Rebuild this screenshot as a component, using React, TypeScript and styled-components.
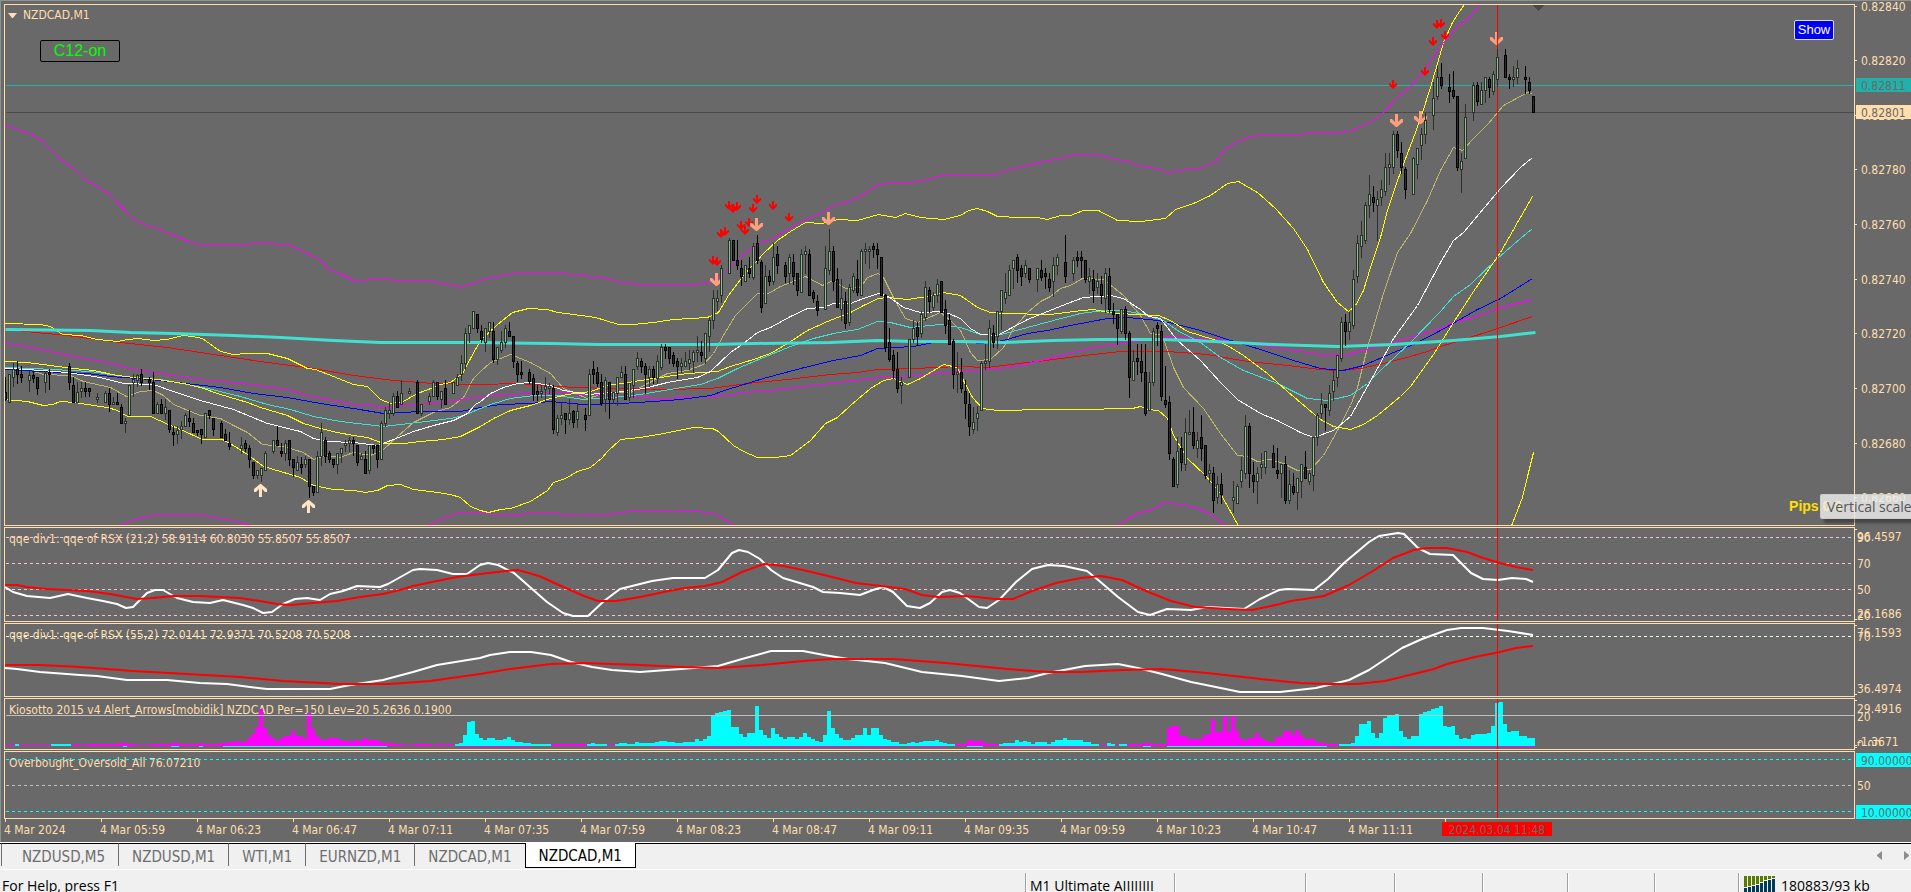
import React from "react";
import styled, { createGlobalStyle } from "styled-components";

const GREY = "#696969";
const CREAM = "#ffdead";
const CHART_FONT = '"DejaVu Sans Condensed", "DejaVu Sans", sans-serif';
const UI_FONT = '"Open Sans", "Noto Sans", sans-serif';

const GlobalStyle = createGlobalStyle`
  * { box-sizing: border-box; }
  html, body { margin: 0; padding: 0; background: #f0f0f0; overflow: hidden; }
`;

/* ---------- layout ---------- */

const Terminal = styled.div`
  display: flex;
  flex-direction: column;
  height: 100vh;
  overflow: hidden;
  font-family: ${UI_FONT};
`;

const ChartWindow = styled.main`
  position: relative;
  flex: 1;
  display: flex;
  flex-direction: column;
  gap: 1px;
  padding: 3px 0 0 3px;
  border-top: 1px solid #8f938f;
  border-left: 1px solid #8f938f;
  background: ${GREY};
  color: ${CREAM};
  font-family: ${CHART_FONT};
  font-size: 12px;
  overflow: hidden;
`;

const Row = styled.section<{ $height?: number }>`
  display: grid;
  grid-template-columns: 1fr 56px;
  grid-template-rows: minmax(0, 1fr);
  ${(p) => (p.$height ? `height: ${p.$height}px; flex: none;` : "flex: 1; min-height: 0;")}
`;

const Pane = styled.div`
  position: relative;
  border: 1px solid ${CREAM};
  overflow: hidden;
`;

const PaneTitle = styled.h2`
  margin: 0;
  padding: 3px 4px 0;
  font-size: 12px;
  line-height: 16px;
  font-weight: 400;
  white-space: nowrap;
`;

const SymbolTitle = styled(PaneTitle)`
  display: flex;
  align-items: center;
  gap: 6px;
  padding: 2px 3px 0;
`;

const Plot = styled.svg`
  position: absolute;
  inset: 0;
  width: 100%;
  height: 100%;
  pointer-events: none;
`;

const Axis = styled.svg`
  display: block;
  width: 100%;
  height: 100%;
  overflow: visible;
  font-family: ${CHART_FONT};
  font-size: 12px;
`;

const ToggleButton = styled.button`
  position: absolute;
  left: 35px;
  top: 35px;
  width: 80px;
  height: 22px;
  padding: 0;
  border: 1px solid #000;
  border-radius: 2px;
  background: ${GREY};
  color: #00ff00;
  font: 16px/20px "Liberation Sans", Arial, sans-serif;
`;

const ShowButton = styled.button`
  position: absolute;
  right: 20px;
  top: 15px;
  width: 40px;
  height: 20px;
  padding: 0;
  border: 1px solid #dcdcdc;
  border-radius: 2px;
  background: #0000f0;
  color: #fff;
  font: 13px/18px "Liberation Sans", Arial, sans-serif;
`;

const Pips = styled.output`
  position: absolute;
  right: 12px;
  bottom: 11px;
  color: #ffe000;
  font: bold 14px/16px "Liberation Sans", Arial, sans-serif;
`;

const Tooltip = styled.div`
  position: absolute;
  left: calc(100% - 91px);
  top: 493px;
  height: 25px;
  padding: 0 6px;
  border: 1px solid rgba(200, 200, 200, 0.8);
  border-radius: 2px;
  background: rgba(238, 238, 238, 0.82);
  box-shadow: 4px 4px 3px rgba(0, 0, 0, 0.35);
  color: #555;
  font: 14px/24px ${UI_FONT};
  white-space: nowrap;
`;

const TimeAxis = styled.div`
  position: relative;
  display: flex;
  height: 23px;
  flex: none;
  margin-top: -1px;
  overflow: hidden;
`;

const TimeLabel = styled.time`
  position: relative;
  flex: none;
  width: 96px;
  padding-top: 4px;
  line-height: 15px;
  white-space: nowrap;
  &::before {
    content: "";
    position: absolute;
    left: 1px;
    top: 0;
    width: 1px;
    height: 3px;
    background: ${CREAM};
  }
`;

const TimeTag = styled.time`
  position: absolute;
  left: 1438px;
  top: 3px;
  width: 110px;
  height: 14px;
  background: #ff0000;
  color: ${GREY};
  line-height: 16px;
  text-align: center;
`;

const TabStrip = styled.nav`
  display: flex;
  flex: none;
  height: 28px;
  padding-left: 1px;
  border-top: 1px solid #fff;
  border-bottom: 1px solid #fff;
  background: linear-gradient(#000, #000) top / 100% 1px no-repeat #f0f0f0;
  font-family: ${CHART_FONT};
`;

const Tab = styled.button<{ $active?: boolean; $first?: boolean }>`
  height: ${(p) => (p.$active ? 25 : 23)}px;
  padding: ${(p) => (p.$active ? 2 : 3)}px 13px 0 ${(p) => (p.$first ? 20 : 13)}px;
  border: 0 solid #6d6d6d;
  border-left-width: 1px;
  ${(p) => p.$active && "border-color: #000; border-right-width: 1px; border-bottom-width: 1px;"}
  background: ${(p) => (p.$active ? "#fff" : "transparent")};
  color: ${(p) => (p.$active ? "#000" : "#6d6d6d")};
  font: 15px/20px ${CHART_FONT};
  white-space: nowrap;
  border-top: ${(p) => (p.$active ? "0" : "1px solid #000")};
`;

const Scrollers = styled.div`
  display: flex;
  gap: 10px;
  margin-left: auto;
  padding: 3px 0 0;
`;

const ScrollButton = styled.button`
  width: 14px;
  height: 18px;
  padding: 0;
  border: 0;
  background: transparent;
`;

const StatusBar = styled.footer`
  display: grid;
  grid-template-columns: 1fr 149px 131px 89px 88px 85px 87px 84px 173px;
  flex: none;
  height: 22px;
  background: #f0f0f0;
  color: #000;
  font-size: 14px;
  white-space: nowrap;
`;

const StatusCell = styled.span<{ $first?: boolean }>`
  display: flex;
  gap: 6px;
  margin-top: 3px;
  height: 24px;
  padding-left: ${(p) => (p.$first ? 2 : 4)}px;
  ${(p) => !p.$first && "border-left: 1px solid #a0a0a0; box-shadow: inset 1px 0 #fff;"}
  line-height: 26px;
`;

/* ---------- data ---------- */

/* One bar per line item: x, high, body top, body bottom, low, direction */
const CANDLES = `
5 377 392 399 400 D,9 374 374 402 402 U,13 363 369 377 386 U,17 361 369 374 383 D,21 366 374 377 382 D,29 371 375 380 391 U,33 372 375 378 382 D,37 377 377 388 394 D,45 371 373 382 392 U,49 369 372 374 389 D,
69 363 366 382 389 D,73 377 385 402 402 D,77 382 392 402 402 U,81 382 388 391 397 U,85 382 388 391 396 D,89 388 388 391 396 D,97 393 397 399 402 U,105 391 393 402 402 U,109 388 393 404 411 D,113 397 402 404 404 U,
117 393 402 404 404 D,121 404 407 423 423 D,125 418 421 423 432 U,129 385 385 415 415 U,133 374 379 382 396 U,137 374 375 380 386 U,141 369 374 382 385 D,149 377 380 382 389 D,153 372 382 413 413 D,157 402 404 413 413 U,
161 399 404 413 413 D,165 399 407 413 419 U,169 410 410 429 432 D,173 426 432 434 445 D,177 426 430 434 443 U,181 421 426 429 438 U,185 413 415 426 426 U,189 410 418 421 426 D,193 418 423 432 432 D,197 430 430 432 435 D,
201 429 429 434 443 D,205 413 413 437 437 U,209 410 410 415 418 D,213 418 418 429 435 D,221 421 423 437 437 D,225 429 434 440 440 D,229 432 443 446 449 D,241 437 445 448 453 U,245 440 443 448 451 D,249 445 448 459 467 D,
253 462 462 475 478 D,257 470 470 475 478 U,261 468 468 475 481 U,265 451 453 470 470 U,273 440 440 451 453 U,277 426 440 445 445 D,281 443 451 453 456 D,285 440 443 453 460 U,289 440 440 459 465 D,293 459 459 467 476 D,
297 456 462 470 470 U,301 457 464 467 473 D,305 456 459 464 467 U,309 459 459 486 497 D,313 486 486 492 495 D,317 451 456 492 492 U,321 423 432 456 465 U,325 437 440 456 462 D,329 451 453 459 462 D,333 459 459 464 467 D,
337 453 453 464 473 U,341 448 448 453 462 U,345 440 443 445 451 U,349 437 440 443 451 U,353 437 440 443 455 D,357 445 445 462 465 D,361 453 456 459 459 U,365 451 459 473 473 D,369 445 445 470 473 U,373 445 445 448 453 D,
377 445 445 459 467 D,381 421 423 459 459 U,385 407 410 423 426 U,389 402 410 413 418 U,393 393 396 413 415 U,397 391 396 407 407 D,401 380 393 404 404 U,409 388 391 393 393 U,417 380 382 413 413 D,421 404 404 413 415 U,
429 393 396 401 404 U,433 380 382 396 396 U,437 382 382 396 399 D,441 391 391 399 407 U,445 380 388 404 404 D,453 382 382 393 393 U,457 374 377 385 385 U,461 355 363 374 380 U,465 328 333 363 369 U,469 325 325 333 342 U,
473 311 311 328 328 U,477 314 314 328 332 D,481 325 331 339 342 D,485 328 328 342 351 U,489 322 322 331 337 U,493 322 331 359 362 D,497 347 347 359 364 U,501 331 342 350 352 U,505 325 328 342 347 U,509 322 331 336 336 D,
513 336 336 361 367 D,517 361 363 374 381 D,521 361 372 374 378 D,529 369 372 381 383 D,533 374 378 394 400 D,537 385 391 394 400 D,541 385 391 393 397 U,545 377 386 389 400 U,549 383 386 388 393 U,553 385 388 429 433 D,
557 415 418 432 435 U,561 403 415 418 424 U,565 413 413 419 433 D,569 399 413 419 424 U,573 410 411 422 427 D,577 404 411 419 427 U,585 408 415 419 430 D,589 369 374 415 415 U,593 361 369 374 383 D,597 367 372 383 386 D,
601 374 382 403 405 D,605 377 380 399 411 U,609 382 382 399 418 D,613 392 392 399 403 U,617 377 377 393 405 U,621 366 372 377 377 U,625 366 374 399 399 D,629 383 383 397 400 U,633 369 369 385 397 U,637 352 358 366 369 U,
641 358 361 366 372 D,645 363 366 374 393 D,649 366 369 377 386 U,653 366 369 377 383 D,657 355 361 378 383 U,661 344 347 367 369 U,665 344 347 350 358 D,669 347 347 358 363 D,673 352 355 363 366 D,677 358 361 366 378 D,
681 358 363 366 372 U,685 352 361 366 366 U,689 350 359 363 369 U,693 350 352 361 372 U,697 336 350 352 361 U,701 341 352 355 361 D,705 333 333 358 363 U,709 317 320 336 351 U,713 290 298 320 328 U,717 290 298 301 310 U,
721 265 268 295 302 U,729 238 240 273 273 U,733 240 240 260 260 D,737 240 260 265 269 D,741 260 268 276 285 D,745 265 265 281 281 U,749 257 268 273 277 D,753 243 246 277 279 U,757 235 243 260 263 D,761 260 262 307 312 D,
765 265 276 303 303 U,769 270 276 281 285 D,773 243 257 281 284 U,777 246 254 265 273 D,785 262 265 276 282 D,789 254 257 273 283 U,793 254 262 276 284 D,797 273 273 290 295 D,801 249 254 292 292 U,805 246 251 254 273 U,
809 249 254 295 295 D,813 290 292 298 302 D,817 295 301 310 315 D,825 246 268 309 309 U,829 229 251 270 274 U,833 246 251 281 290 D,837 268 279 307 307 D,841 279 298 309 320 U,845 292 301 323 328 D,849 284 287 322 325 U,
853 273 276 290 292 U,857 260 279 292 295 D,861 249 251 295 295 U,865 243 249 251 263 U,869 246 249 251 268 U,873 243 246 249 257 D,877 243 249 254 268 D,881 257 257 295 295 D,885 294 295 347 351 D,889 328 342 359 361 D,
893 350 355 370 378 D,897 352 369 388 392 D,901 377 382 385 403 U,909 339 339 377 377 U,913 320 328 339 342 U,917 322 327 336 345 D,921 311 314 333 337 U,925 281 287 317 320 U,929 287 290 301 312 D,933 292 295 307 310 U,
937 279 284 295 302 U,941 281 281 312 312 D,945 300 309 325 333 D,949 314 320 344 344 D,953 339 341 374 388 D,957 352 372 374 392 U,961 358 372 388 392 D,965 380 391 403 418 D,969 393 404 426 435 D,973 407 422 429 433 U,
977 406 413 418 430 U,981 361 363 410 410 U,985 344 361 363 369 U,989 320 328 361 367 U,993 325 333 342 347 D,997 311 311 336 348 U,1001 290 290 311 329 U,1005 273 292 298 303 U,1009 265 270 295 295 U,1013 260 260 268 288 U,
1017 254 257 270 282 D,1021 265 268 276 285 D,1025 260 265 273 277 U,1029 268 268 279 282 D,1037 268 268 279 291 U,1041 260 270 277 280 D,1045 268 273 276 288 D,1049 273 279 287 291 D,1053 257 265 281 296 U,1057 254 257 265 274 U,
1065 235 262 276 282 D,1073 257 260 273 280 U,1077 251 257 260 266 D,1081 251 257 260 277 D,1085 260 260 279 282 D,1089 268 276 281 293 U,1093 270 279 290 302 D,1097 273 281 287 293 U,1101 276 284 295 303 D,1105 268 273 298 312 U,
1109 268 276 309 312 D,1113 303 311 314 323 D,1117 314 314 328 344 D,1121 309 309 331 333 U,1125 306 309 333 339 D,1129 331 333 377 397 D,1133 350 361 380 380 U,1137 344 358 361 374 D,1141 344 361 372 381 D,1145 344 372 413 415 D,
1149 372 382 410 410 U,1153 328 331 382 385 U,1157 322 325 328 345 D,1161 325 331 396 400 D,1165 366 400 404 407 D,1169 396 402 453 459 D,1173 457 459 486 486 D,1177 437 451 484 487 U,1181 437 448 462 470 D,1185 418 432 464 470 U,
1189 410 432 434 434 U,1193 407 432 445 448 D,1197 432 440 448 457 U,1201 415 437 448 460 D,1205 445 445 475 478 D,1209 464 470 473 482 U,1213 467 473 500 512 D,1217 476 484 497 503 U,1221 473 484 494 503 D,1233 481 497 500 512 U,
1237 484 486 503 503 U,1241 457 470 481 487 U,1245 415 426 473 478 U,1249 423 426 473 487 D,1253 462 475 481 492 D,1257 467 473 481 503 U,1261 453 464 467 478 U,1265 451 451 467 473 U,1273 445 453 467 467 D,1277 448 470 473 478 D,
1281 464 464 473 497 U,1285 456 464 500 503 D,1289 470 484 500 503 U,1293 473 486 492 494 D,1297 478 478 492 509 U,1301 464 464 481 497 U,1305 451 467 478 478 D,1309 470 473 481 484 U,1313 437 437 475 490 U,1317 413 415 437 445 U,
1321 393 404 413 418 U,1325 404 404 407 430 D,1329 385 393 410 415 U,1333 370 380 391 400 U,1337 355 355 377 386 U,1341 317 322 358 361 U,1345 314 322 331 345 D,1349 312 322 331 339 U,1353 270 279 325 328 U,1357 235 243 276 282 U,
1361 221 235 246 257 U,1365 202 205 240 243 U,1369 175 194 205 217 U,1373 186 197 202 211 D,1377 191 199 205 240 U,1381 180 189 197 205 U,1385 153 167 191 195 U,1389 153 164 167 184 U,1393 131 134 167 173 U,1397 131 134 150 157 D,
1401 142 153 167 173 D,1405 167 169 189 198 D,1413 157 158 194 194 U,1417 148 148 164 178 U,1421 128 134 145 159 U,1425 113 120 134 143 U,1433 82 98 115 129 U,1437 66 77 96 99 U,1441 63 77 85 88 D,1449 74 87 91 102 D,
1453 71 90 96 98 D,1457 96 96 167 170 D,1461 153 161 169 192 U,1465 104 117 158 158 U,1473 82 85 112 120 U,1477 82 85 101 105 D,1481 82 90 104 104 U,1485 77 77 90 102 U,1489 77 79 87 97 D,1493 71 74 91 94 U,
1497 49 57 79 86 U,1505 49 55 77 77 D,1509 74 77 79 88 D,1513 66 77 79 86 U,1517 60 68 77 83 U,1525 66 77 79 93 D,1529 77 82 90 93 D,1533 96 96 112 112 D`;

type Line = { color: string; width?: number; points: string };

const PRICE_LINES: Line[] = [
  { color: "#bdb76b", points: "5,367 30,370 43,374 70,375 83,381 110,387 126,396 140,391 153,390 163,395 173,404 200,415 220,418 233,425 247,432 262,444 283,446 303,452 313,459 325,455 340,457 353,452 370,455 383,449 397,436 413,422 433,412 450,407 463,397 473,378 480,371 490,362 510,354 530,362 550,373 563,388 587,398 607,392 630,392 647,383 667,373 687,370 703,364 713,353 723,335 735,315 757,293 768,293 780,286 805,276 822,285 833,280 845,288 860,287 867,277 878,273 883,277 893,297 905,318 917,322 940,312 950,320 960,330 970,352 977,360 990,359 1003,347 1013,328 1027,312 1040,301 1050,296 1060,288 1070,285 1082,278 1103,279 1123,295 1140,315 1150,333 1162,335 1173,367 1183,387 1203,408 1220,433 1237,455 1247,456 1257,461 1270,459 1283,463 1297,470 1310,469 1323,455 1337,430 1350,405 1357,387 1367,347 1383,293 1397,252 1410,233 1427,200 1440,170 1453,147 1462,150 1473,138 1488,123 1503,105 1527,92 1532,93" },
  { color: "#ff0000", points: "5,329 25,331 67,335 120,342 167,347 213,354 260,361 313,368 353,375 393,380 433,383 480,384 517,383 547,385 573,387 613,388 663,389 710,388 747,383 787,379 830,374 857,372 877,369 913,368 960,366 987,367 1010,364 1053,359 1093,354 1120,351 1167,351 1207,354 1247,361 1287,365 1320,369 1337,370 1360,368 1387,362 1410,356 1427,351 1440,346 1460,340 1497,328 1532,316" },
  { color: "#ff00ff", points: "5,343 20,345 40,349 73,356 107,362 133,369 173,375 207,380 243,383 287,389 307,395 333,400 360,405 387,406 420,404 450,401 480,396 507,394 533,393 560,393 590,394 620,396 660,398 713,396 747,392 780,389 813,385 847,381 880,377 913,375 960,371 993,369 1020,365 1060,355 1093,347 1133,341 1167,337 1207,338 1243,342 1293,350 1320,354 1347,354 1367,349 1410,337 1440,328 1453,322 1473,317 1500,307 1532,299" },
  { color: "#0000ff", points: "5,369 40,371 87,373 110,376 150,379 177,382 220,387 253,393 287,397 320,403 353,408 383,413 420,411 460,411 480,407 500,404 530,403 550,401 583,404 620,403 653,401 680,399 710,395 727,389 763,378 800,368 833,360 860,355 877,348 913,346 933,342 960,341 980,343 1003,340 1027,333 1047,330 1070,325 1107,318 1127,317 1157,320 1173,323 1200,330 1227,339 1260,349 1293,360 1320,368 1343,370 1363,365 1393,352 1413,344 1440,330 1477,309 1500,298 1532,278" },
  { color: "#40e0d0", points: "5,367 33,368 90,371 117,375 133,377 160,379 187,384 207,388 240,396 267,404 290,409 313,416 340,421 383,426 417,422 450,418 463,415 480,408 493,403 510,398 533,395 557,395 583,399 613,397 640,394 670,389 700,384 717,378 737,368 763,357 790,346 813,338 833,333 857,329 877,321 890,322 910,327 940,324 960,327 980,334 997,335 1027,327 1053,320 1080,313 1103,310 1123,310 1143,314 1163,320 1177,330 1200,342 1220,357 1243,370 1277,383 1307,398 1327,400 1350,395 1367,383 1380,370 1410,342 1440,311 1453,296 1470,284 1497,258 1520,238 1532,228" },
  { color: "#ffff00", points: "5,361 27,362 50,365 73,368 93,370 117,375 133,377 157,379 183,383 200,387 220,394 247,402 260,407 287,415 303,423 320,428 337,432 353,435 367,437 383,443 403,443 420,441 443,439 460,436 470,431 480,426 493,418 510,410 530,405 550,398 567,394 590,391 607,385 627,382 653,378 687,373 717,371 730,366 753,359 770,353 787,343 807,330 827,321 850,312 863,305 878,298 887,297 907,299 927,296 943,292 960,295 977,307 990,312 1003,313 1050,314 1073,311 1093,309 1103,311 1117,313 1137,314 1158,315 1170,320 1187,331 1213,339 1227,345 1243,355 1267,373 1287,391 1307,408 1320,419 1333,426 1350,429 1363,424 1377,415 1400,396 1410,386 1433,354 1453,322 1473,291 1500,252 1517,222 1532,196" },
  { color: "#ffff00", points: "5,323 40,324 50,326 62,334 80,335 97,339 117,341 127,339 138,338 153,340 167,339 182,335 192,336 202,338 220,351 233,354 247,353 267,353 287,358 307,368 315,369 333,376 353,384 367,386 380,399 390,403 403,401 417,393 433,387 440,384 450,382 462,373 470,358 480,340 497,324 512,312 528,308 547,309 557,312 573,314 595,317 618,324 633,324 653,322 673,319 707,317 718,312 728,295 743,275 763,253 777,240 790,231 805,222 822,223 837,219 857,220 878,214 895,217 905,213 920,217 943,219 960,215 968,210 977,208 987,211 997,216 1020,217 1037,217 1047,219 1060,215 1070,215 1083,210 1098,210 1117,220 1140,221 1165,218 1175,209 1193,203 1210,195 1227,183 1238,181 1257,192 1275,208 1293,228 1307,249 1323,282 1337,302 1348,311 1355,305 1363,290 1370,267 1380,237 1387,210 1397,180 1407,153 1415,132 1422,112 1430,87 1437,63 1443,42 1452,22 1457,14 1466,1" },
  { color: "#ffff00", points: "5,399 27,401 43,405 52,404 60,401 75,402 80,403 107,407 117,410 127,416 150,416 168,424 180,429 202,439 222,439 233,445 247,454 263,466 280,471 300,477 313,485 333,489 353,490 365,492 377,490 387,485 400,484 413,489 430,491 450,494 460,497 470,506 480,510 488,512 500,509 510,508 530,501 547,490 553,482 565,478 577,471 590,467 602,457 607,451 620,439 640,437 663,433 693,427 712,428 718,431 733,445 743,451 757,457 775,457 790,455 810,440 825,423 837,417 850,405 870,388 883,380 893,378 907,384 920,378 943,364 957,367 964,382 972,397 982,408 997,410 1047,409 1097,409 1110,408 1132,408 1140,406 1147,409 1158,410 1167,418 1173,435 1187,458 1205,475 1220,493 1240,529" },
  { color: "#ffff00", points: "1510,528 1522,497 1528,472 1533,452" },
  { color: "#ff00ff", points: "5,125 20,130 36,136 43,142 57,156 73,168 83,178 100,188 110,195 133,219 147,225 160,229 167,233 177,236 187,241 200,244 240,244 260,243 287,244 307,253 322,261 327,268 337,272 353,280 380,279 400,280 427,281 440,282 447,284 461,286 470,284 480,280 490,277 503,275 515,273 533,272 563,273 580,275 595,276 608,278 623,283 643,284 662,285 687,285 703,283 712,281 722,274 733,263 747,251 760,242 770,239 787,229 805,219 820,213 830,207 840,203 848,201 860,196 877,184 887,183 910,182 923,180 945,174 995,174 1010,169 1027,165 1043,161 1055,159 1072,155 1097,154 1110,158 1127,161 1140,166 1157,168 1167,172 1175,171 1187,169 1198,168 1208,164 1215,161 1225,149 1235,142 1248,137 1261,134 1300,134 1313,132 1340,132 1352,130 1367,123 1382,113 1397,97 1410,86 1425,69 1435,53 1443,42 1455,28 1467,19 1481,2" },
  { color: "#ff00ff", points: "119,525 133,519 147,516 163,514 187,514 203,515 227,519 252,525" },
  { color: "#ff00ff", points: "427,525 440,519 457,513 465,512 480,513 500,514 550,513 587,515 617,513 627,511 653,510 692,511 710,512 720,516 730,523 735,525" },
  { color: "#ff00ff", points: "1116,525 1130,517 1140,512 1152,509 1164,502 1177,504 1190,506 1200,509 1210,514 1225,525" },
  { color: "#ffffff", points: "5,368 27,369 67,372 100,377 123,383 153,384 173,391 200,400 233,409 267,423 300,431 313,438 327,441 353,442 377,445 393,439 413,431 433,425 453,420 467,413 475,404 480,401 490,393 503,387 517,383 530,382 550,385 563,390 587,394 613,392 643,388 667,382 697,377 710,371 730,352 743,343 757,332 770,327 790,316 807,308 823,307 833,303 850,303 863,298 878,293 888,296 903,307 920,312 943,311 960,318 970,328 980,334 997,335 1010,328 1027,319 1047,311 1067,303 1083,297 1110,295 1123,298 1140,309 1148,316 1160,318 1177,340 1200,360 1220,382 1237,399 1260,413 1277,420 1300,432 1313,437 1333,430 1350,416 1363,393 1377,368 1393,338 1417,305 1440,262 1453,240 1463,232 1500,188 1520,167 1532,157" },
  { color: "#40e0d0", width: 3, points: "5,329 90,330 130,332 173,333 233,335 280,337 333,340 380,342 480,342 552,343 597,344 713,344 753,343 830,342 877,340 913,341 960,341 1003,342 1053,340 1097,339 1160,339 1193,340 1233,342 1273,344 1337,346 1393,344 1453,340 1500,336 1535,332" },
];

const RSX21_LINES: Line[] = [
  { color: "#ffffff", width: 2, points: "5,587 13,592 27,596 50,598 68,594 87,598 103,601 117,604 126,608 133,607 147,593 155,590 163,590 177,598 193,602 210,603 223,600 243,605 253,608 263,613 272,612 283,604 295,599 307,598 320,600 330,594 343,591 357,586 380,587 388,584 413,570 420,569 437,570 453,574 467,574 480,565 488,563 498,565 514,573 531,588 547,602 563,613 573,616 588,616 604,601 620,589 640,584 652,581 673,578 705,578 718,570 732,553 739,550 748,552 760,559 771,570 783,578 803,584 813,587 823,592 840,593 860,595 873,590 883,587 893,592 907,606 920,608 930,603 942,592 950,590 960,593 979,607 987,608 999,600 1016,582 1032,569 1048,565 1064,566 1087,571 1097,579 1118,597 1138,612 1150,615 1167,609 1191,610 1207,607 1244,609 1260,599 1279,590 1287,589 1314,590 1328,579 1344,563 1369,542 1379,536 1398,533 1404,534 1418,548 1430,554 1453,555 1471,573 1483,579 1498,580 1512,578 1526,579 1533,582" },
  { color: "#ff0000", width: 2, points: "5,585 17,585 27,587 47,589 87,591 110,594 137,599 153,598 173,596 200,596 240,598 260,601 277,604 290,605 313,603 337,601 360,597 383,594 400,590 413,586 437,581 457,577 480,574 506,571 518,570 539,576 559,585 584,596 598,601 616,601 640,597 664,592 685,588 705,586 722,582 742,572 764,564 783,566 803,570 828,576 856,583 889,587 905,589 922,595 938,597 967,596 995,599 1013,599 1032,591 1056,583 1081,578 1101,576 1122,580 1146,591 1171,601 1195,607 1228,609 1252,610 1280,604 1291,601 1324,596 1349,585 1373,571 1393,558 1414,550 1426,548 1447,548 1467,552 1483,558 1500,563 1516,567 1533,570" },
];

const RSX55_LINES: Line[] = [
  { color: "#ffffff", width: 2, points: "5,668 17,669 40,672 80,675 97,676 127,680 167,680 200,683 227,684 250,687 267,689 330,689 350,685 383,680 413,672 437,665 480,658 490,655 510,652 531,652 551,655 571,662 592,667 612,670 640,672 681,669 718,666 742,659 771,651 803,651 824,655 848,659 885,663 922,672 962,676 999,681 1028,678 1048,673 1085,666 1118,664 1138,668 1162,674 1191,682 1211,686 1240,692 1280,692 1316,688 1349,680 1369,670 1402,648 1422,639 1447,630 1461,628 1483,628 1508,631 1533,635" },
  { color: "#ff0000", width: 2, points: "5,665 40,665 80,667 133,671 187,674 240,677 283,681 340,684 390,684 430,681 480,674 510,669 551,664 584,663 640,665 681,667 718,668 762,665 803,661 832,659 893,659 946,663 1007,669 1048,672 1081,672 1122,670 1162,669 1207,673 1252,678 1280,681 1300,683 1328,684 1357,684 1385,681 1434,669 1447,664 1475,657 1500,652 1516,648 1533,646" },
];

/* Histogram runs: colour, first x, then "end x:top" pairs */
const HISTOGRAM: [string, number, string][] = [
  ["#00ffff", 15, "19:744"],
  ["#00ffff", 51, "71:744"],
  ["#ff00ff", 75, "79:744"],
  ["#ff00ff", 87, "119:744 127:743 135:744"],
  ["#ff00ff", 151, "171:744 179:743 199:744 203:743 219:744 227:743 235:742 239:741 247:742 251:738 255:734 259:727 263:709 267:728 271:735 275:738 279:741 283:739 291:736 295:731 303:736 307:739 311:713 315:729 319:736 323:739 327:740 339:738 343:740 355:741 359:740 363:741 367:738 379:740 383:742 393:743 403:744"],
  ["#ff00ff", 415, "431:744"],
  ["#ff00ff", 439, "443:744"],
  ["#ff00ff", 447, "451:744"],
  ["#00ffff", 455, "459:744 463:743 467:735 471:722 475:721 479:734 483:738 487:740 495:738 503:740 507:739 511:737 515:740 523:742 531:743 551:744"],
  ["#ff00ff", 551, "587:744"],
  ["#00ffff", 587, "591:744 595:743 607:744"],
  ["#00ffff", 615, "619:744 627:743 635:744 639:742 655:743 659:742 667:741 675:742 683:743 695:742 699:739 703:741 707:739 711:736 715:716 719:713 723:712 727:711 731:710 739:727 743:734 747:737 755:733 759:706 763:730 767:735 771:738 775:728 779:734 783:737 787:739 795:737 799:739 803:737 807:733 811:737 815:739 819:741 823:742 827:735 831:711 835:728 839:734 843:738 851:740 855:738 863:735 867:728 871:735 879:728 883:735 887:739 891:740 899:742 907:744 911:743 915:742 919:743 923:742 935:741 939:740 943:742 947:743 955:744"],
  ["#ff00ff", 955, "967:744 971:740 983:741 987:743 999:744"],
  ["#00ffff", 999, "1003:744 1015:743 1019:740 1023:742 1027:741 1031:742 1035:744 1047:742 1051:744 1055:742 1063:740 1067:738 1083:740 1091:742 1099:744"],
  ["#00ffff", 1107, "1111:743 1115:744"],
  ["#00ffff", 1119, "1127:744"],
  ["#ff00ff", 1127, "1143:744 1151:743 1167:744 1171:728 1179:726 1187:736 1203:739 1207:735 1211:734 1215:719 1223:732 1227:716 1231:732 1235:716 1239:731 1243:738 1247:741 1255:738 1259:733 1263:738 1267:740 1275:742 1283:737 1291:731 1295:735 1299:730 1303:735 1315:739 1319:742 1327:743 1339:744"],
  ["#00ffff", 1339, "1351:744 1355:743 1359:736 1367:724 1371:721 1375:733 1379:738 1383:733 1387:718 1395:716 1399:714 1403:731 1407:737 1411:739 1419:736 1423:714 1427:712 1431:711 1435:709 1439:708 1443:706 1447:726 1451:727 1455:726 1459:735 1463:739 1467:738 1471:739 1475:735 1487:734 1491:733 1495:726 1499:703 1503:702 1507:724 1511:732 1519:731 1527:736 1535:738"],
];

const UNDERLINES: [string, number, number][] = [
  ["#00ffff", 123, 127], ["#00ffff", 171, 179], ["#00ffff", 199, 203], ["#00ffff", 223, 387],
  ["#ff00ff", 459, 531], ["#ff00ff", 591, 595], ["#ff00ff", 651, 899], ["#ff00ff", 907, 915],
  ["#ff00ff", 919, 947], ["#00ffff", 967, 983], ["#ff00ff", 1003, 1091], ["#ff00ff", 1107, 1111],
  ["#00ffff", 1143, 1151], ["#00ffff", 1167, 1327], ["#ff00ff", 1351, 1535],
];

const SELL_MARKS = [[713, 261], [717, 262], [721, 234], [725, 232], [729, 206], [733, 209], [737, 207], [741, 226], [745, 231], [749, 223], [753, 209], [757, 200], [773, 206], [789, 218], [1393, 85], [1425, 72], [1433, 42], [1437, 25], [1441, 24], [1445, 36]];
const SELL_ARROWS = [[717, 280], [757, 225], [829, 219], [1397, 121], [1421, 118], [1497, 39]];
const BUY_ARROWS = [[261, 490], [309, 506]];

const TIMES = ["4 Mar 2024", "4 Mar 05:59", "4 Mar 06:23", "4 Mar 06:47", "4 Mar 07:11", "4 Mar 07:35", "4 Mar 07:59", "4 Mar 08:23", "4 Mar 08:47", "4 Mar 09:11", "4 Mar 09:35", "4 Mar 09:59", "4 Mar 10:23", "4 Mar 10:47", "4 Mar 11:11", ""];
const TABS = ["NZDUSD,M5", "NZDUSD,M1", "WTI,M1", "EURNZD,M1", "NZDCAD,M1", "NZDCAD,M1"];

/* ---------- chart parts ---------- */

/* Chart coordinates are shared by all panes; each pane shifts them by its own top. */
const PlotArea = ({ top, label, children }: { top: number; label: string; children: React.ReactNode }) => (
  <Plot role="img" aria-label={label}>
    <g transform={`translate(-5 ${-(top + 1)})`} shapeRendering="crispEdges">
      {children}
    </g>
  </Plot>
);

const Level = ({ y, color, dashed }: { y: number; color: string; dashed?: boolean }) => (
  <svg x="5" y={y} width="100%" height="1">
    <line x1="1" x2="100%" y1="0.5" y2="0.5" stroke={color} strokeDasharray={dashed ? "3 3" : undefined} />
  </svg>
);

/* Hairlines stay pixel-sharp; the wider pens are smoothed and sit on whole pixels. */
const Lines = ({ data }: { data: Line[] }) => (
  <>
    {data.map(({ color, width = 1, points }, i) => (
      <polyline
        key={i}
        points={points}
        fill="none"
        stroke={color}
        strokeWidth={width}
        strokeLinejoin="round"
        shapeRendering={width === 1 ? "crispEdges" : "auto"}
        transform={width % 2 ? "translate(0.5 0.5)" : undefined}
      />
    ))}
  </>
);

const Cursor = () => <rect x="1497" y="0" width="1" height="900" fill="#ff0000" />;

const Candles = () => (
  <>
    {CANDLES.trim().split(/,\s*/).map((row) => {
      const [xs, hi, top, bottom, low, dir] = row.trim().split(" ");
      const x = +xs, y = +top, h = +bottom - +top + 1;
      const edge = dir === "U" ? "#2c302c" : "#000000";
      return (
        <g key={xs}>
          <rect x={x} y={+hi} width="1" height={+low - +hi + 1} fill={edge} />
          <rect x={x - 1} y={y} width="3" height={h} fill={edge} />
          <rect x={x} y={y + 1} width="1" height={Math.max(h - 2, 1)} fill={dir === "U" ? "#8fbc8f" : "#2c2c2c"} />
        </g>
      );
    })}
  </>
);

const Histogram = () => (
  <>
    <rect x="5" y="745" width="1530" height="1" fill="#ff00ff" />
    {HISTOGRAM.map(([color, start, runs]) => {
      let x = start;
      return runs.split(" ").map((run) => {
        const [end, top] = run.split(":").map(Number);
        const from = x;
        x = end;
        return <rect key={end} x={from} y={top} width={end - from} height={746 - top} fill={color} />;
      });
    })}
    {UNDERLINES.map(([color, a, b]) => (
      <rect key={a} x={a} y="746" width={b - a} height="1" fill={color} />
    ))}
  </>
);

const BIG_ARROW = "M-2 -7h3v8l3 -3h2v3l-6 5h-1l-6 -5v-3h2l3 3z";
const SMALL_ARROW = "M-1 -5h2v5l2 -2h1v2l-4 4 -4 -4v-2h1l2 2z";

const AxisText = ({ x = 2, y, children, fill = CREAM }: { x?: number; y: number; children: string; fill?: string }) => (
  <text x={x} y={y} fill={fill}>{children}</text>
);

const Ticks = ({ at }: { at: number[] }) => (
  <>{at.map((y) => <rect key={y} x="0" y={y} width="2" height="1" fill={CREAM} />)}</>
);

const PriceAxis = () => (
  <Axis role="img" aria-label="Price scale">
    <g transform="translate(0 -4)">
      {[[6, "0.82840"], [60, "0.82820"], [115, "0.82800"], [169, "0.82780"], [224, "0.82760"], [279, "0.82740"], [333, "0.82720"], [388, "0.82700"], [443, "0.82680"], [497, "0.82660"]].map(([y, t]) => (
        <AxisText key={t} x={6} y={+y + 5}>{String(t)}</AxisText>
      ))}
      <Ticks at={[6, 60, 115, 169, 224, 279, 333, 388, 443, 497]} />
      <rect x="1" y="78" width="55" height="14" fill="#20b2aa" />
      <AxisText x={6} y={90} fill={GREY}>0.82811</AxisText>
      <rect x="1" y="105" width="55" height="14" fill={CREAM} />
      <AxisText x={6} y={117} fill={GREY}>0.82801</AxisText>
    </g>
  </Axis>
);

const BARS = [12, 11, 10, 9, 7, 5, 4, 3];

const App = () => (
  <Terminal>
    <GlobalStyle />
    <ChartWindow>
      <Row>
        <Pane>
          <SymbolTitle>
            <svg width="9" height="5" aria-hidden="true"><path d="M0 0h9l-4 5h-1z" fill={CREAM} /></svg>
            NZDCAD,M1
          </SymbolTitle>
          <Pips>Pips 0.0</Pips>
          <PlotArea top={4} label="NZDCAD one minute price chart">
            <Level y={85} color="#20b2aa" />
            <Level y={112} color="#4a4a4a" />
            <Lines data={PRICE_LINES} />
            <path d="M1533 5h11l-5 6h-1z" fill="#484848" />
            <g shapeRendering="auto">
              {SELL_MARKS.map(([x, y]) => <path key={x} d={SMALL_ARROW} transform={`translate(${x} ${y})`} fill="#ff0000" />)}
              {SELL_ARROWS.map(([x, y]) => <path key={x} d={BIG_ARROW} transform={`translate(${x} ${y})`} fill="#ffa07a" />)}
              {BUY_ARROWS.map(([x, y]) => <path key={x} d={BIG_ARROW} transform={`translate(${x} ${y}) scale(1 -1)`} fill="#ffe4c4" />)}
            </g>
            <Cursor />
            <Candles />
          </PlotArea>
          <ToggleButton type="button">C12-on</ToggleButton>
          <ShowButton type="button">Show</ShowButton>
        </Pane>
        <PriceAxis />
      </Row>

      <Row $height={95}>
        <Pane>
          <PaneTitle>qqe div1: qqe of RSX (21,2) 58.9114 60.8030 55.8507 55.8507</PaneTitle>
          <PlotArea top={527} label="RSX 21 oscillator">
            {[537, 563, 589, 615].map((y) => <Level key={y} y={y} color="#ffc0cb" dashed />)}
            <Lines data={RSX21_LINES} />
            <Cursor />
          </PlotArea>
        </Pane>
        <Axis role="img" aria-label="RSX 21 scale">
          <AxisText y={14}>96.4597</AxisText>
          <AxisText y={15}>90</AxisText>
          <AxisText y={41}>70</AxisText>
          <AxisText y={67}>50</AxisText>
          <AxisText y={91}>26.1686</AxisText>
          <AxisText y={93}>20</AxisText>
          <Ticks at={[2, 92]} />
        </Axis>
      </Row>

      <Row $height={74}>
        <Pane>
          <PaneTitle>qqe div1: qqe of RSX (55,2) 72.0141 72.9371 70.5208 70.5208</PaneTitle>
          <PlotArea top={623} label="RSX 55 oscillator">
            <Level y={636} color="#ffffe0" dashed />
            <Lines data={RSX55_LINES} />
            <Cursor />
          </PlotArea>
        </Pane>
        <Axis role="img" aria-label="RSX 55 scale">
          <AxisText y={14}>76.1593</AxisText>
          <AxisText y={18}>70</AxisText>
          <AxisText y={70}>36.4974</AxisText>
          <Ticks at={[2, 71]} />
        </Axis>
      </Row>

      <Row $height={52}>
        <Pane>
          <PaneTitle>Kiosotto 2015 v4 Alert_Arrows[mobidik] NZDCAD Per=150 Lev=20 5.2636 0.1900</PaneTitle>
          <PlotArea top={698} label="Kiosotto histogram">
            <Histogram />
            <Level y={715} color="#c0c0c0" />
            <Cursor />
          </PlotArea>
        </Pane>
        <Axis role="img" aria-label="Kiosotto scale">
          <AxisText y={15}>29.4916</AxisText>
          <AxisText y={23}>20</AxisText>
          <AxisText y={48}>-1.3671</AxisText>
          <svg width="56" height="48"><AxisText y={51}>0.00</AxisText></svg>
          <Ticks at={[2, 47, 49]} />
        </Axis>
      </Row>

      <Row $height={68}>
        <Pane>
          <PaneTitle>Overbought_Oversold_All 76.07210</PaneTitle>
          <PlotArea top={751} label="Overbought and oversold levels">
            <Level y={759} color="#00ffff" dashed />
            <Level y={785} color="#c0c0c0" dashed />
            <Level y={811} color="#00ffff" dashed />
            <Cursor />
          </PlotArea>
        </Pane>
        <Axis role="img" aria-label="Overbought and oversold scale">
          <rect x="1" y="2" width="55" height="14" fill="#00ffff" />
          <AxisText x={6} y={14} fill={GREY}>90.00000</AxisText>
          <AxisText y={39}>50</AxisText>
          <rect x="1" y="54" width="55" height="14" fill="#00ffff" />
          <AxisText x={6} y={66} fill={GREY}>10.00000</AxisText>
        </Axis>
      </Row>

      <TimeAxis>
        {TIMES.map((t, i) => <TimeLabel key={i}>{t}</TimeLabel>)}
        <TimeTag>2024.03.04 11:48</TimeTag>
      </TimeAxis>
      <Tooltip role="tooltip">Vertical scale</Tooltip>
    </ChartWindow>

    <TabStrip>
      {TABS.map((t, i) => (
        <Tab key={i} type="button" $first={i === 0} $active={i === TABS.length - 1}>{t}</Tab>
      ))}
      <Scrollers>
        <ScrollButton type="button" aria-label="Scroll tabs left">
          <svg width="14" height="9"><path d="M9 0v9l-5 -4v-1z" fill="#8c8c8c" /></svg>
        </ScrollButton>
        <ScrollButton type="button" aria-label="Scroll tabs right">
          <svg width="14" height="9"><path d="M7 0v9l5 -4v-1z" fill="#8c8c8c" /></svg>
        </ScrollButton>
      </Scrollers>
    </TabStrip>

    <StatusBar>
      <StatusCell $first>For Help, press F1</StatusCell>
      <StatusCell>M1 Ultimate AIIIIIIII</StatusCell>
      <StatusCell />
      <StatusCell />
      <StatusCell />
      <StatusCell />
      <StatusCell />
      <StatusCell />
      <StatusCell>
        <svg width="32" height="20" shapeRendering="crispEdges" aria-hidden="true">
          {BARS.map((h, i) => (
            <g key={i}>
              <rect x={1 + i * 4} y="3" width="3" height={h - 1} fill="#5a7a00" />
              <rect x={1 + i * 4} y={h + 3} width="3" height="20" fill="#003c5a" />
            </g>
          ))}
        </svg>
        180883/93 kb
      </StatusCell>
    </StatusBar>
  </Terminal>
);

export default App;
